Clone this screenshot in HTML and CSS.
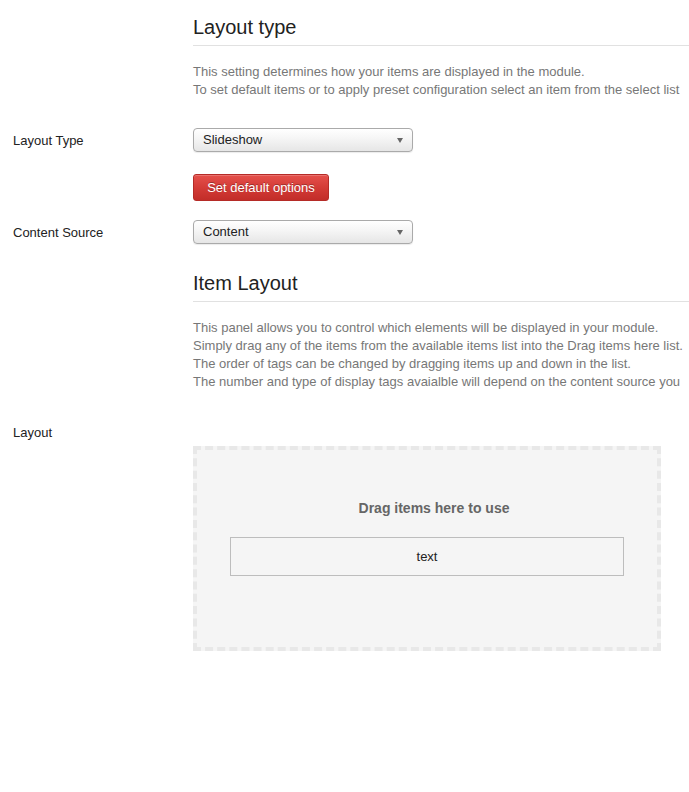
FILE: index.html
```html
<!DOCTYPE html>
<html>
<head>
<meta charset="utf-8">
<link rel="stylesheet" href="styles.css">
</head>
<body>
<div class="page">
  <div class="row">
    <div class="label"></div>
    <div class="control">
      <h2 class="section-title">Layout type</h2>
      <p class="desc">This setting determines how your items are displayed in the module.<br>To set default items or to apply preset configuration select an item from the select list</p>
    </div>
  </div>

  <div class="row row-field row-type">
    <div class="label">Layout Type</div>
    <div class="control">
      <div class="select"><span>Slideshow</span><i class="arrow"></i></div>
    </div>
  </div>

  <div class="row row-btn">
    <div class="label"></div>
    <div class="control">
      <button class="btn-red">Set default options</button>
    </div>
  </div>

  <div class="row row-field row-source">
    <div class="label">Content Source</div>
    <div class="control">
      <div class="select"><span>Content</span><i class="arrow"></i></div>
    </div>
  </div>

  <div class="row">
    <div class="label"></div>
    <div class="control">
      <h2 class="section-title title-2">Item Layout</h2>
      <p class="desc">This panel allows you to control which elements will be displayed in your module.<br>Simply drag any of the items from the available items list into the Drag items here list.<br>The order of tags can be changed by dragging items up and down in the list.<br>The number and type of display tags avaialble will depend on the content source you</p>
    </div>
  </div>

  <div class="row row-layout">
    <div class="label">Layout</div>
    <div class="control">
      <div class="dropzone">
        <div class="drop-title">Drag items here to use</div>
        <div class="drop-item">text</div>
      </div>
    </div>
  </div>
</div>
</body>
</html>
```

FILE: styles.css
```css
html, body {
  margin: 0;
  padding: 0;
  overflow: hidden;
  background: #fff;
}
body {
  font-family: "Liberation Sans", Arial, sans-serif;
  font-size: 13px;
  color: #222;
}
.page {
  width: 676px;
  padding: 0 0 0 13px;
}
.row {
  display: flex;
  align-items: flex-start;
}
.label {
  width: 180px;
  flex: 0 0 180px;
  font-size: 13px;
  color: #222;
}
.control {
  flex: 1 1 auto;
  min-width: 0;
}
.section-title {
  margin: 0;
  padding-top: 15px;
  font-size: 20px;
  font-weight: normal;
  color: #222;
  line-height: 24px;
  padding-bottom: 6px;
  border-bottom: 1px solid #e1e1e1;
}
.title-2 {
  padding-top: 0;
  margin-top: 27px;
}
.desc {
  margin: 17px 0 0 0;
  color: #777;
  font-size: 13px;
  line-height: 17.7px;
  white-space: nowrap;
}
.row-field {
  align-items: center;
}
.row-type {
  margin-top: 30px;
}
.select {
  position: relative;
  box-sizing: border-box;
  width: 220px;
  height: 24px;
  border: 1px solid #aaa;
  border-radius: 4px;
  background: linear-gradient(#ffffff, #f6f6f6 40%, #e6e6e6);
  box-shadow: 0 1px 1px rgba(0,0,0,0.08);
  padding-left: 9px;
  line-height: 22px;
  font-size: 13px;
  color: #222;
}
.arrow {
  position: absolute;
  right: 9px;
  top: 9px;
  width: 0;
  height: 0;
  border-left: 3.5px solid transparent;
  border-right: 3.5px solid transparent;
  border-top: 5px solid #666;
}
.row-btn {
  margin-top: 22px;
}
.btn-red {
  box-sizing: border-box;
  height: 27px;
  width: 136px;
  padding: 0;
  border: 1px solid #b52b27;
  border-radius: 3px;
  background: linear-gradient(#e5504b, #d23a35 55%, #c22d29);
  color: #fff;
  font-family: "Liberation Sans", Arial, sans-serif;
  font-size: 13px;
  text-shadow: 0 -1px 0 rgba(0,0,0,0.3);
  box-shadow: inset 0 1px 0 rgba(255,255,255,0.2);
}
.row-source {
  margin-top: 19px;
}
.row-layout {
  margin-top: 35px;
}
.row-layout .label {
  line-height: 16px;
}
.dropzone {
  box-sizing: border-box;
  width: 468px;
  height: 205px;
  margin-top: 21px;
  border: 4px dashed #e8e8e8;
  background: #f5f5f5;
  padding: 0 33px;
}
.drop-title {
  text-align: center;
  font-weight: bold;
  color: #666;
  font-size: 14px;
  margin-top: 50px;
  line-height: 16px;
  padding-left: 14px;
}
.drop-item {
  box-sizing: border-box;
  margin-top: 21px;
  height: 39px;
  border: 1px solid #bdbdbd;
  text-align: center;
  line-height: 37px;
  color: #222;
  font-size: 13px;
}
```
